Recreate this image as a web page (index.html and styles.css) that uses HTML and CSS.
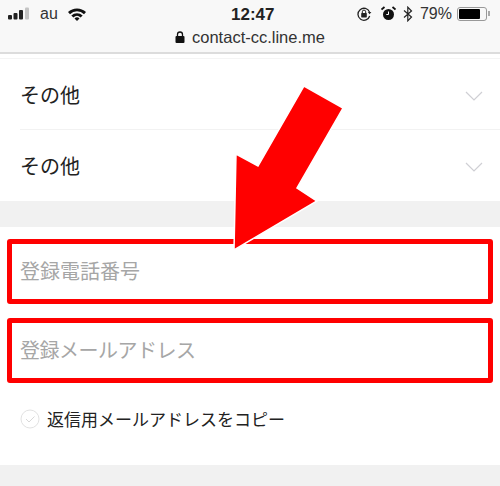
FILE: index.html
```html
<!DOCTYPE html>
<html>
<head><title>LINE Contact</title>
<link rel="stylesheet" href="styles.css">
</head>
<body>
<div class="phone-header">
  <div class="status-bar">
    <div class="status-left">
      <svg class="signal" width="23" height="13" viewBox="0 0 23 13">
        <rect x="0" y="8" width="4" height="4.500" rx="1" fill="#222"/>
        <rect x="5.500" y="6" width="4" height="6.500" rx="1" fill="#222"/>
        <rect x="11" y="3" width="4" height="9.500" rx="1" fill="#222"/>
        <rect x="17" y="0.500" width="4" height="12" rx="1" fill="#c4c4c4"/>
      </svg>
      <span class="carrier">au</span>
      <svg class="wifi" width="20" height="14" viewBox="0 0 20 14">
        <path d="M1 5 A13 13 0 0 1 19 5 L17 7.200 A10 10 0 0 0 3 7.200 Z" fill="#111"/>
        <path d="M4.300 8.400 A8.500 8.500 0 0 1 15.700 8.400 L13.600 10.400 A5.500 5.500 0 0 0 6.400 10.400 Z" fill="#111"/>
        <path d="M7.500 11.500 A3.600 3.600 0 0 1 12.500 11.500 L10 14 Z" fill="#111"/>
      </svg>
    </div>
    <div class="clock">12:47</div>
    <div class="status-right">
      <svg width="16" height="16" viewBox="0 0 16 16">
        <path d="M13.500 6 A6 6 0 1 0 13.700 10" fill="none" stroke="#222" stroke-width="1.300"/>
        <path d="M11.800 6 L15.400 6 L13.600 8.300 Z" fill="#222"/>
        <rect x="5.200" y="7" width="5.600" height="4.400" rx="0.600" fill="#222"/>
        <path d="M6.300 7 V5.800 A1.700 1.700 0 0 1 9.700 5.800 V7" fill="none" stroke="#222" stroke-width="1"/>
      </svg>
      <svg class="alarm" width="15" height="15" viewBox="0 0 15 15">
        <circle cx="7.500" cy="8.500" r="5.500" fill="#111"/>
        <path d="M7.500 5.500 V8.500 H5.300" fill="none" stroke="#fff" stroke-width="1"/>
        <path d="M0.500 3.500 L3.500 1 M14.500 3.500 L11.500 1" stroke="#111" stroke-width="1.800"/>
      </svg>
      <svg class="bluetooth" width="10" height="16" viewBox="0 0 10 16">
        <path d="M1 4.500 L8.500 11 L4.800 14.800 V1.200 L8.500 5 L1 11.500" fill="none" stroke="#222" stroke-width="1.200"/>
      </svg>
      <span class="battery-text">79%</span>
      <div class="battery"><div class="battery-level"></div></div>
      <div class="battery-cap"></div>
    </div>
  </div>
  <div class="url-bar">
    <svg width="10" height="12" viewBox="0 0 10 12">
      <rect x="0.500" y="5" width="9" height="7" rx="1" fill="#111"/>
      <path d="M2.500 5 V3.500 A2.500 2.500 0 0 1 7.500 3.500 V5" fill="none" stroke="#111" stroke-width="1.300"/>
    </svg>
    <span>contact-cc.line.me</span>
  </div>
</div>

<div class="select-group">
  <div class="select-row">
    <span>その他</span>
    <svg class="chevron" width="18" height="10" viewBox="0 0 18 10"><path d="M1 1 L9 9 L17 1" fill="none" stroke="#cfcfd4" stroke-width="1.200"/></svg>
  </div>
  <div class="select-row">
    <span>その他</span>
    <svg class="chevron" width="18" height="10" viewBox="0 0 18 10"><path d="M1 1 L9 9 L17 1" fill="none" stroke="#cfcfd4" stroke-width="1.200"/></svg>
  </div>
</div>

<div class="gray-band"></div>

<div class="form-group">
  <div class="field">登録電話番号</div>
  <div class="field field-mail">登録メールアドレス</div>
  <div class="copy-row">
    <svg width="20" height="20" viewBox="0 0 20 20">
      <circle cx="10" cy="10" r="9" fill="#fff" stroke="#e2e2e2" stroke-width="1"/>
      <path d="M6 10 L9 13 L14.500 7.500" fill="none" stroke="#d8d8d8" stroke-width="1"/>
    </svg>
    <span>返信用メールアドレスをコピー</span>
  </div>
</div>

<div class="gray-footer"></div>

<svg class="arrow" width="500" height="486" viewBox="0 0 500 486">
  <polygon points="304,86 343,108 297,188 317,201 234,250 236,154 258,166" fill="#ff0000" stroke="#fff" stroke-width="1.500"/>
</svg>
</body>
</html>
```

FILE: styles.css
```css
body {
  margin: 0;
  width: 500px;
  height: 486px;
  overflow: hidden;
  position: relative;
  background-color: #fff;
  font-family: "Liberation Sans", "Noto Sans CJK JP", sans-serif;
  color: #222;
}

.phone-header {
  height: 52px;
  background-color: #f8f8f8;
  border-bottom: 2px solid #dcdcdc;
}

.status-bar {
  height: 27px;
  padding: 0 10px 0 8px;
  display: flex;
  align-items: center;
  justify-content: space-between;
  position: relative;
}

.status-left {
  display: flex;
  align-items: center;
}

.carrier {
  font-size: 16px;
  margin-left: 9px;
  color: #333;
}

.wifi {
  margin-left: 9px;
}

.clock {
  position: absolute;
  left: 231px;
  top: 5px;
  font-size: 17px;
  font-weight: bold;
  color: #222;
}

.status-right {
  display: flex;
  align-items: center;
}

.alarm {
  margin-left: 9px;
}

.bluetooth {
  margin-left: 7px;
}

.battery-text {
  font-size: 16px;
  margin-left: 7px;
  color: #333;
}

.battery {
  margin-left: 5px;
  width: 26px;
  height: 10px;
  border: 1px solid #999;
  border-radius: 3px;
  padding: 1px;
}

.battery-level {
  width: 21px;
  height: 10px;
  background-color: #000;
  border-radius: 1px;
}

.battery-cap {
  width: 2px;
  height: 5px;
  margin-left: 1px;
  background-color: #aaa;
}

.url-bar {
  display: flex;
  align-items: center;
  justify-content: center;
  gap: 7px;
  font-size: 16.5px;
  color: #333;
  height: 20px;
}

.select-group {
  margin-top: 4px;
  padding-left: 20px;
  height: 142px;
  border-top: 1px solid #f4f4f4;
}

.select-row {
  height: 70px;
  padding-right: 17px;
  display: flex;
  align-items: center;
  justify-content: space-between;
  font-size: 20px;
  color: #222;
}

.select-row + .select-row {
  border-top: 1px solid #f2f2f2;
}

.chevron {
  margin-top: 4px;
}

.gray-band {
  height: 26px;
  background-color: #f1f1f1;
}

.form-group {
  height: 238px;
  padding: 12px 7px 0;
  box-sizing: border-box;
}

.field {
  height: 65px;
  box-sizing: border-box;
  border: 5px solid #ff0000;
  border-radius: 3px;
  padding: 0 0 3px 8px;
  display: flex;
  align-items: center;
  font-size: 20px;
  color: #a6a6a6;
}

.field-mail {
  margin-top: 14px;
  letter-spacing: -0.5px;
}

.copy-row {
  margin-top: 23px;
  padding-left: 13px;
  display: flex;
  align-items: center;
  gap: 7px;
  font-size: 17px;
  color: #222;
}

.gray-footer {
  height: 21px;
  background-color: #f1f1f1;
}

.arrow {
  position: absolute;
  left: 0;
  top: 0;
}
```
